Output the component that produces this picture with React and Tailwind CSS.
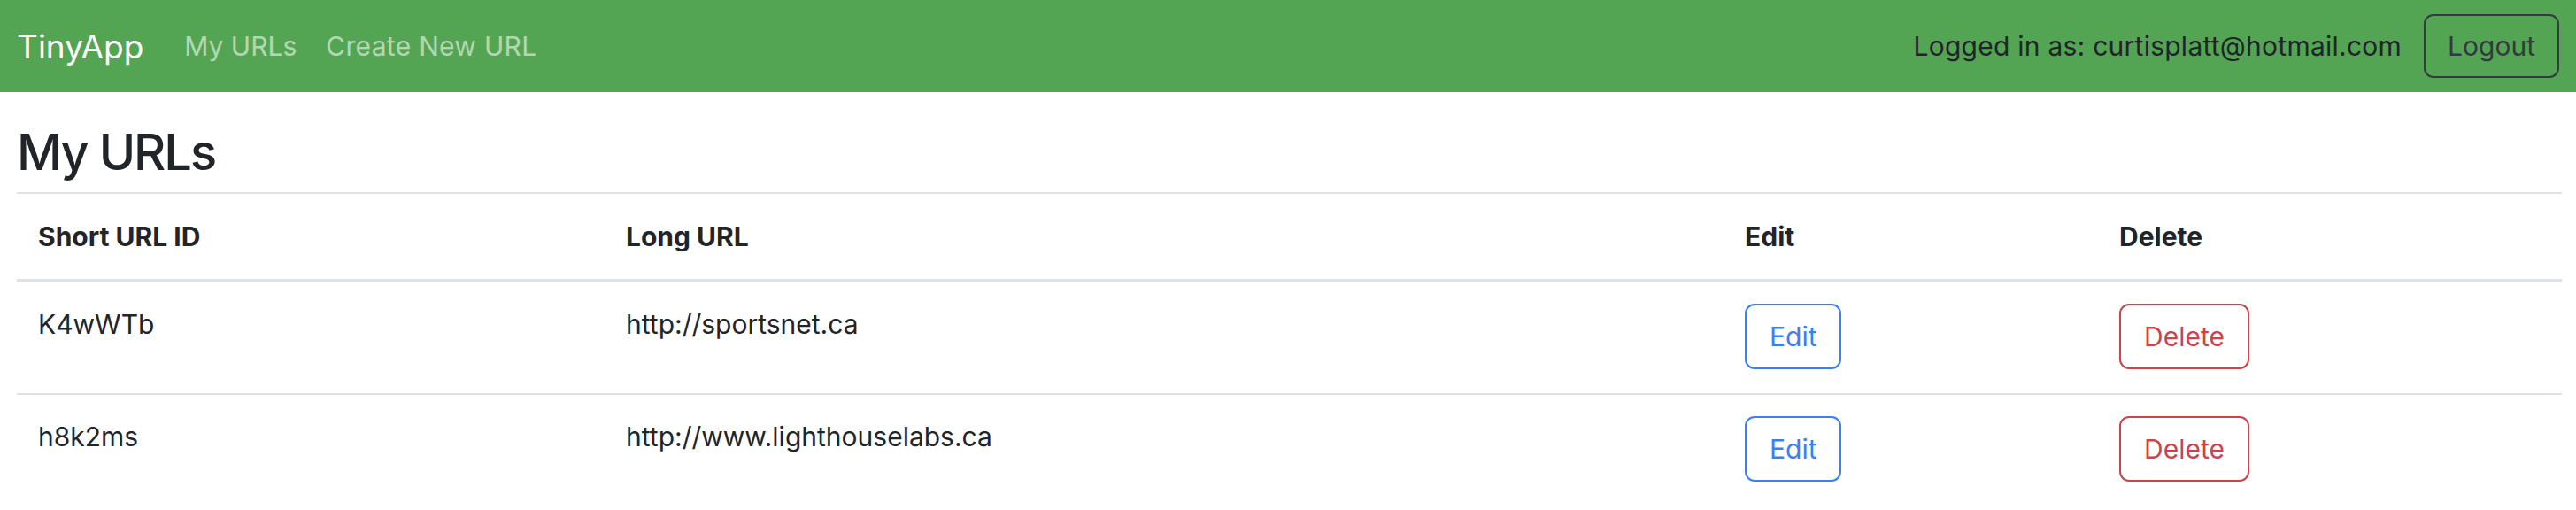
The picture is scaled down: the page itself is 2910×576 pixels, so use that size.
import React from 'react';

const urls = [
  { id: 'K4wWTb', longURL: 'http://sportsnet.ca' },
  { id: 'h8k2ms', longURL: 'http://www.lighthouselabs.ca' },
];

const NavBar = ({ email }) => (
  <nav className="h-[104px] bg-[#53a553] px-[19px] flex items-center justify-between">
    <div className="flex items-center">
      <a className="text-white text-[37px] leading-none mr-[46px]">TinyApp</a>
      <a className="text-white/55 text-[30px] leading-none mr-[33px]">My URLs</a>
      <a className="text-white/55 text-[30px] leading-none tracking-[0.3px]">Create New URL</a>
    </div>
    <div className="flex items-center">
      <span className="text-[#212529] text-[30px] mr-[25px] tracking-[0.25px]">Logged in as: {email}</span>
      <button className="h-[72px] px-[25px] border-2 border-[#343a40] rounded-[11px] text-[#343a40] text-[30px]">
        Logout
      </button>
    </div>
  </nav>
);

const UrlRow = ({ url }) => (
  <tr className="border-t-2 border-[#dee2e6]">
    <td className="px-[24px] pt-[25px] pb-[26px] align-top leading-[45px]">{url.id}</td>
    <td className="px-[24px] pt-[25px] pb-[26px] align-top leading-[45px]">{url.longURL}</td>
    <td className="px-[24px] pt-[24px] pb-[27px] align-top">
      <button className="h-[74px] px-[26px] border-2 border-[#3b7ff5] rounded-[11px] text-[#3b7ff5] text-[30px]">
        Edit
      </button>
    </td>
    <td className="px-[24px] pt-[24px] pb-[27px] align-top">
      <button className="h-[74px] px-[26px] border-2 border-[#cd434b] rounded-[11px] text-[#cd434b] text-[30px]">
        Delete
      </button>
    </td>
  </tr>
);

export default function App() {
  return (
    <div className="h-[576px] overflow-hidden bg-white font-['Inter',sans-serif]">
      <NavBar email="curtisplatt@hotmail.com" />

      <main className="px-[19px]">
        <h2 className="text-[56px] tracking-[-2px] font-medium text-[#212529] leading-[71px] mt-[33px] mb-[9px]">My URLs</h2>

        {/* URL table */}
        <table className="w-full table-fixed border-t-2 border-[#dee2e6] text-[30px] text-[#212529]">
          <colgroup>
            <col className="w-[664px]" />
            <col className="w-[1264px]" />
            <col className="w-[423px]" />
            <col className="w-[524px]" />
          </colgroup>
          <thead>
            <tr className="border-b-4 border-[#dee2e6]">
              <th className="px-[24px] py-[25px] text-left font-bold leading-[46px]">Short URL ID</th>
              <th className="px-[24px] py-[25px] text-left font-bold leading-[46px]">Long URL</th>
              <th className="px-[24px] py-[25px] text-left font-bold leading-[46px]">Edit</th>
              <th className="px-[24px] py-[25px] text-left font-bold leading-[46px]">Delete</th>
            </tr>
          </thead>
          <tbody>
            {urls.map((url) => (
              <UrlRow key={url.id} url={url} />
            ))}
          </tbody>
        </table>
      </main>
    </div>
  );
}
